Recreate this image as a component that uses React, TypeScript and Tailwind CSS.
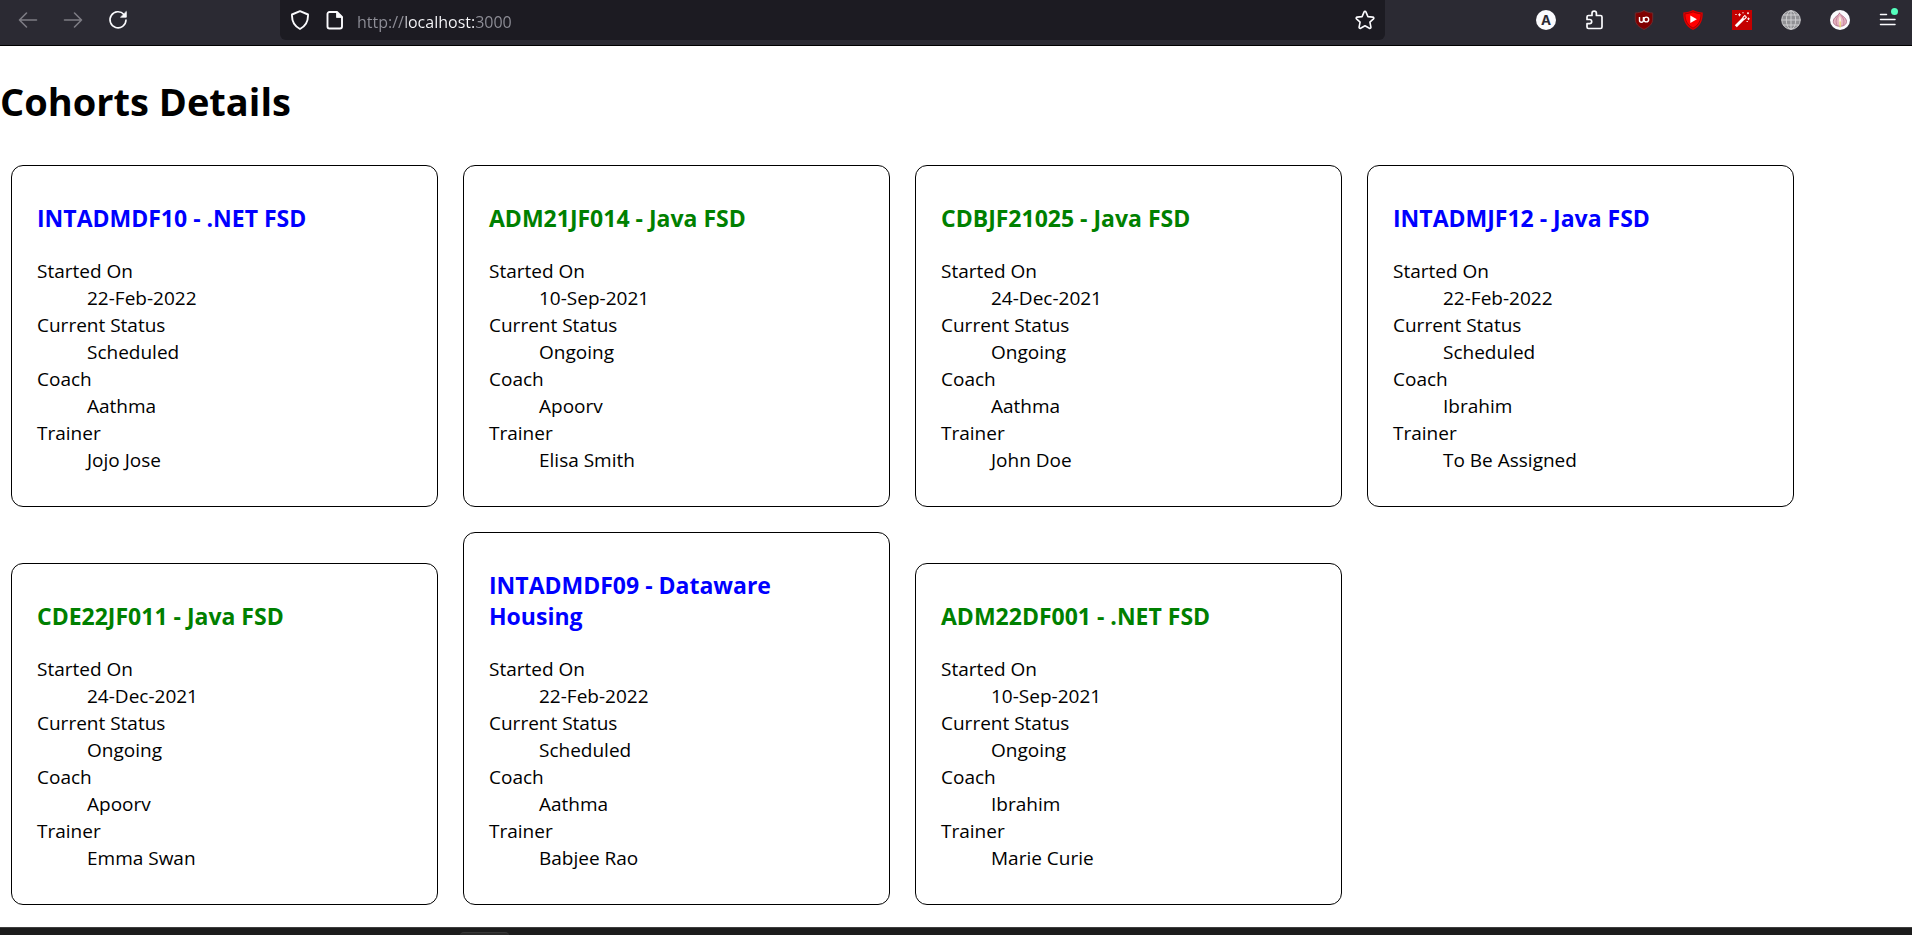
import React from "react";

type Cohort = {
  code: string;
  startedOn: string;
  status: "Scheduled" | "Ongoing";
  coach: string;
  trainer: string;
};

const cohorts: Cohort[] = [
  { code: "INTADMDF10 - .NET FSD", startedOn: "22-Feb-2022", status: "Scheduled", coach: "Aathma", trainer: "Jojo Jose" },
  { code: "ADM21JF014 - Java FSD", startedOn: "10-Sep-2021", status: "Ongoing", coach: "Apoorv", trainer: "Elisa Smith" },
  { code: "CDBJF21025 - Java FSD", startedOn: "24-Dec-2021", status: "Ongoing", coach: "Aathma", trainer: "John Doe" },
  { code: "INTADMJF12 - Java FSD", startedOn: "22-Feb-2022", status: "Scheduled", coach: "Ibrahim", trainer: "To Be Assigned" },
  { code: "CDE22JF011 - Java FSD", startedOn: "24-Dec-2021", status: "Ongoing", coach: "Apoorv", trainer: "Emma Swan" },
  { code: "INTADMDF09 - Dataware Housing", startedOn: "22-Feb-2022", status: "Scheduled", coach: "Aathma", trainer: "Babjee Rao" },
  { code: "ADM22DF001 - .NET FSD", startedOn: "10-Sep-2021", status: "Ongoing", coach: "Ibrahim", trainer: "Marie Curie" },
];

function CohortCard({ cohort }: { cohort: Cohort }) {
  return (
    <article className="w-[427px] max-w-full rounded-xl border border-black px-[25px] pt-[37px] pb-8">
      <h2 className={`text-[23px] leading-[31px] font-bold ${cohort.status === "Ongoing" ? "text-[#008000]" : "text-[#0000ff]"}`}>
        {cohort.code}
      </h2>
      <dl className="mt-6 text-[19px] leading-[27px]">
        <dt>Started On</dt>
        <dd className="ml-[50px]">{cohort.startedOn}</dd>
        <dt>Current Status</dt>
        <dd className="ml-[50px]">{cohort.status}</dd>
        <dt>Coach</dt>
        <dd className="ml-[50px]">{cohort.coach}</dd>
        <dt>Trainer</dt>
        <dd className="ml-[50px]">{cohort.trainer}</dd>
      </dl>
    </article>
  );
}

function IconButton({ label, children }: { label: string; children: React.ReactNode }) {
  return (
    <button type="button" aria-label={label} className="relative flex size-5 shrink-0 items-center justify-center">
      {children}
    </button>
  );
}

const line = {
  width: 20,
  height: 20,
  viewBox: "0 0 20 20",
  fill: "none",
  stroke: "currentColor",
  strokeWidth: 1.6,
  strokeLinecap: "round" as const,
  strokeLinejoin: "round" as const,
};

function BrowserBar() {
  return (
    <header className="flex h-[46px] shrink-0 border-b border-black bg-[#2b2a33] text-[#fbfbfe]">
      <div className="flex h-10 w-[280px] shrink-0 items-center gap-[25px] pl-[18px]">
        <IconButton label="Back">
          <svg {...line} className="text-[#7d7c84]"><path d="M18.500 10H1.500M8.500 3L1.500 10l7 7" /></svg>
        </IconButton>
        <IconButton label="Forward">
          <svg {...line} className="text-[#7d7c84]"><path d="M1.500 10h17M11.500 3l7 7-7 7" /></svg>
        </IconButton>
        <IconButton label="Reload">
          <svg {...line}>
            <path d="M16 4.500A8 8 0 1 0 18 10" />
            <path d="M18.300 1.800v5.400h-5.400z" fill="currentColor" strokeWidth="0.8" />
          </svg>
        </IconButton>
      </div>

      <div className="flex h-10 min-w-0 flex-1 items-center rounded-b-md bg-[#1c1b22] px-[10px]">
        <IconButton label="Tracking protection">
          <svg {...line} strokeWidth={1.9}><path d="M10 1.200l8 3.300c.3 6.500-2 11.500-8 14.500-6-3-8.300-8-8-14.500z" /></svg>
        </IconButton>
        <div className="ml-[15px] flex">
          <IconButton label="Site information">
            <svg {...line} strokeWidth={1.9}>
              <path d="M4.500 2H12l5 5v9.500a2 2 0 0 1-2 2H4.500a2 2 0 0 1-2-2V4a2 2 0 0 1 2-2z" />
              <path d="M11.500 2v5.500H17z" fill="currentColor" strokeWidth="0.8" />
            </svg>
          </IconButton>
        </div>
        <input
          type="text"
          aria-label="Address"
          defaultValue="http://localhost:3000"
          className="ml-3 h-full min-w-0 flex-1 bg-[linear-gradient(to_right,#8f8f98_49px,#fbfbfe_49px,#fbfbfe_117px,#8f8f98_117px)] bg-clip-text pt-[3px] text-[16px] text-transparent outline-none"
        />
        <IconButton label="Bookmark this page">
          <svg {...line}>
            <path d="M10 1.300c.5 0 .8.300 1 .8l1.900 4.500 4.900.5c1 .1 1.400 1.100.7 1.800l-3.600 3.300 1 4.900c.2.900-.7 1.600-1.500 1.100L10 15.700l-4.400 2.500c-.8.500-1.700-.2-1.500-1.100l1-4.900L1.500 8.900c-.7-.7-.3-1.700.7-1.800l4.900-.5L9 2.100c.2-.5.500-.8 1-.8z" />
          </svg>
        </IconButton>
      </div>

      <div className="flex h-10 w-[527px] shrink-0 items-center justify-end gap-[29px] pr-[13px]">
        <IconButton label="Account">
          <svg width="20" height="20" viewBox="0 0 20 20">
            <circle cx="10" cy="10" r="10" fill="#fbfbfe" />
            <text x="10" y="14.800" textAnchor="middle" fontSize="13.500" fontWeight="700" fill="#2b2a33" fontFamily="Inter, sans-serif">A</text>
          </svg>
        </IconButton>
        <IconButton label="Extensions">
          <svg {...line} strokeWidth={1.700}>
            <path d="M2 7a1.500 1.500 0 0 1 1.500-1.500H7V3.300a2.200 2.200 0 0 1 4.400 0v2.200h4.100A1.500 1.500 0 0 1 17 7v10a1.500 1.500 0 0 1-1.500 1.500h-12A1.500 1.500 0 0 1 2 17v-3.300h2.600a2.100 2.100 0 0 0 0-4.200H2z" />
          </svg>
        </IconButton>
        <IconButton label="Content blocker">
          <svg width="20" height="20" viewBox="0 0 20 20">
            <path d="M10 .5c2.500 1.700 5.500 2.300 8.700 2.500v6c0 5-3.500 8-8.700 10.500C4.800 17 1.300 14 1.300 9V3C4.500 2.800 7.500 2.200 10 .5z" fill="#800000" stroke="#6d2a2e" strokeWidth="1" />
            <path d="M5.500 7v3.300a1.900 1.900 0 0 0 3.900 0V7" fill="none" stroke="#fff" strokeWidth="1.400" />
            <circle cx="12.300" cy="9.500" r="2.400" fill="none" stroke="#fff" strokeWidth="1.400" />
          </svg>
        </IconButton>
        <IconButton label="Video sponsor skipper">
          <svg width="20" height="20" viewBox="0 0 20 20">
            <path d="M10 0c2.800 1.500 6.300 2.200 9.700 2.500.3 7.500-1.700 13.500-9.700 17.500C2 16 0 10 .3 2.500 3.700 2.200 7.200 1.500 10 0z" fill="#d90000" />
            <path d="M10 1.800c2.500 1.200 5.200 1.800 8 2 0 6.200-1.900 11-8 14.300C3.900 14.800 2 10 2 3.800c2.800-.2 5.500-.8 8-2z" fill="#ff0000" stroke="#8d0000" strokeWidth="0.700" />
            <path d="M7.300 5.500v7.600l6.600-3.800z" fill="#fff" />
          </svg>
        </IconButton>
        <IconButton label="Cleanup wand">
          <svg width="20" height="20" viewBox="0 0 20 20">
            <path d="M0 0h20v20H0z" fill="#c40000" />
            <path d="M3.800 16.200l9.500-9.500" stroke="#fff" strokeWidth="2.800" />
            <path d="M11.500 8.500l2.500-2.500" stroke="#fff" strokeWidth="3.200" />
            <path d="M11.700 8.300l1.600-1.600" stroke="#c40000" strokeWidth="1.200" />
            <path d="M7.500 3.300v3M6 4.800h3M16.500 7.500v2.600M15.200 8.800h2.600M16 2.200v2M15 3.200h2M3.300 4.500h1.400M10.300 2.800h1.400M14.500 11.500h1.400" stroke="#fff" strokeWidth="0.900" />
          </svg>
        </IconButton>
        <IconButton label="Language">
          <svg width="20" height="20" viewBox="0 0 20 20" fill="none" stroke="#d4d4d6" strokeWidth="0.900">
            <circle cx="10" cy="10" r="9.300" fill="#919195" />
            <ellipse cx="10" cy="10" rx="4.700" ry="9.300" />
            <path d="M10 .7v18.600M.7 10h18.600M2.200 5h15.600M2.200 15h15.600" />
          </svg>
        </IconButton>
        <IconButton label="Onion routing">
          <svg width="20" height="20" viewBox="0 0 20 20">
            <circle cx="10" cy="10" r="10" fill="#fbfbfe" />
            <path d="M9.500 2.800c.4 2.500 7 4.200 7 8.700 0 3-2.800 4.800-6.500 4.800s-6.700-1.800-6.700-4.800c0-4.500 5.500-5.700 6.200-8.700z" fill="#e6b3c1" stroke="#a5617a" strokeWidth="0.800" />
            <path d="M8.800 5.500C6 8 5.200 12 7.300 15.800M11 5.500c3 3 3.800 6.800 2 10.300" fill="none" stroke="#b8708a" strokeWidth="0.700" />
            <path d="M9.900 5.500c-1.500 4-1.500 7.500.2 10.800 1.800-3.300 1.400-6.800-.2-10.800z" fill="#faf0dc" />
            <path d="M10.200 11.500v6" stroke="#e8d67a" strokeWidth="1.400" />
          </svg>
        </IconButton>
        <IconButton label="Application menu">
          <svg {...line} strokeWidth={1.500}><path d="M1.500 4.500h6M1.500 9.500h14.500M1.500 14.500h14.500" /></svg>
          <span className="absolute -top-[2px] right-px size-[7px] rounded-full bg-[#54ffbd]" />
        </IconButton>
      </div>
    </header>
  );
}

export default function App() {
  return (
    <div className="flex min-h-screen flex-col bg-white font-['Open_Sans',sans-serif] text-black">
      <BrowserBar />
      <main className="flex-1 pb-[22px]">
        <h1 className="pt-[29px] text-[38px] leading-[53px] font-bold">Cohorts Details</h1>
        <section aria-label="Cohorts" className="mt-[37px] flex flex-wrap items-end gap-[25px] px-[11px]">
          {cohorts.map((cohort) => (
            <CohortCard key={cohort.code} cohort={cohort} />
          ))}
        </section>
      </main>
      <footer className="h-[9px] shrink-0 overflow-hidden border-t border-[#3f3f3f] bg-[#1c1c1c] pt-1 pl-[460px]">
        <div className="h-4 w-[49px] rounded-t border-t border-[#383838] bg-[#292929]" />
      </footer>
    </div>
  );
}
